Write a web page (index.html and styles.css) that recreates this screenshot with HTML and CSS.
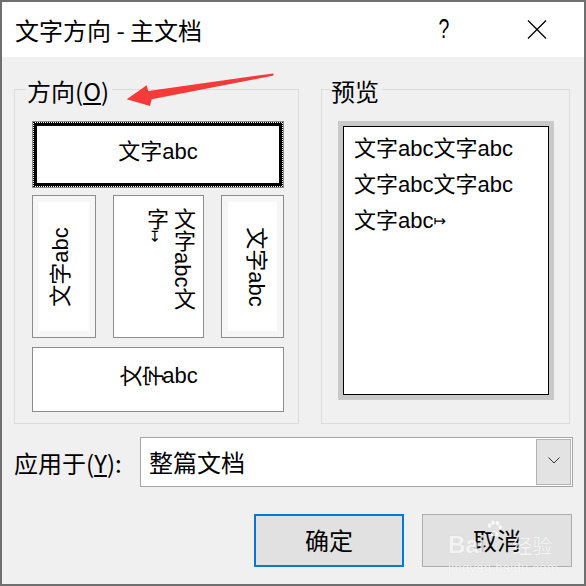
FILE: index.html
```html
<!DOCTYPE html>
<html lang="zh-CN">
<head>
<meta charset="utf-8">
<title>文字方向 - 主文档</title>
<link rel="stylesheet" href="styles.css">
</head>
<body>
<div class="window">
  <div class="titlebar">
    <div class="title">文字方向 - 主文档</div>
    <div class="tb-btn help">?</div>
    <div class="tb-btn close">
      <svg width="20" height="19" viewBox="0 0 20 19"><path d="M1 0.5 L19 18.5 M19 0.5 L1 18.5" stroke="#000" stroke-width="1.3" fill="none"/></svg>
    </div>
  </div>

  <div class="main">
    <fieldset class="group orient">
      <legend>方向(<u>O</u>)</legend>
      <div class="opt sel"><div class="focus"><div class="thick">文字abc</div></div></div>
      <div class="row2">
        <div class="opt faint v1"><span class="rot r270">文字abc</span></div>
        <div class="opt v2"><div class="vtext">文字abc文字<span class="mark">↦</span></div></div>
        <div class="opt faint v3"><span class="rot r90">文字abc</span></div>
      </div>
      <div class="opt h2"><span class="rc">文</span><span class="rc">字</span>abc</div>
    </fieldset>

    <fieldset class="group preview">
      <legend>预览</legend>
      <div class="pv-frame">
        <div class="pv-page">
          <p>文字abc文字abc</p>
          <p>文字abc文字abc</p>
          <p>文字abc<span class="pmark">↦</span></p>
        </div>
      </div>
    </fieldset>
  </div>

  <div class="apply">
    <div class="apply-label">应用于(<u>Y</u>):</div>
    <div class="combo">
      <div class="combo-text">整篇文档</div>
      <div class="combo-btn">
        <svg width="12" height="7" viewBox="0 0 12 7"><path d="M0.5 0.5 L6 6 L11.5 0.5" stroke="#333" stroke-width="1" fill="none"/></svg>
      </div>
    </div>
  </div>

  <div class="buttons">
    <div class="btn ok">确定</div>
    <div class="btn cancel">取消</div>
  </div>

  <svg class="annot" width="586" height="586" viewBox="0 0 586 586">
    <polygon points="126.7,99.3 146.7,85.3 148.3,91 273.3,73.4 273.6,75.6 151.7,99.3 150,106" fill="#f53a3a"/>
  </svg>

  <div class="wm">
    <div class="wm-line"><span class="wm-bai">Bai</span><svg class="paw" width="16" height="18" viewBox="0 0 18 20"><ellipse cx="4" cy="6" rx="2" ry="2.6" /><ellipse cx="8" cy="3" rx="2" ry="2.6"/><ellipse cx="13" cy="3.5" rx="2" ry="2.6"/><ellipse cx="16" cy="8" rx="1.8" ry="2.4"/><path d="M5 16 Q9 8 14 15 Q15 19 10 18 Q6 19 5 16 Z"/></svg><span class="wm-jy">经验</span></div>
    <div class="wm-url">jingyan.baidu.com</div>
  </div>
</div>
</body>
</html>
```

FILE: styles.css
```css
body {
  margin: 0;
  background: #f0f0f0;
}

.window {
  position: relative;
  width: 586px;
  height: 586px;
  box-sizing: border-box;
  border: 2px solid #6f6f6f;
  background: #f0f0f0;
  display: flex;
  flex-direction: column;
  overflow: hidden;
  font-family: "Noto Sans CJK SC", sans-serif;
  color: #000;
}

/* title bar */
.titlebar {
  height: 55px;
  flex: 0 0 55px;
  background: #fff;
  display: flex;
  align-items: center;
}
.title {
  flex: 1;
  padding-left: 13px;
  font-size: 24px;
  line-height: 1;
  white-space: nowrap;
}
.tb-btn {
  height: 55px;
  display: flex;
  align-items: center;
  justify-content: center;
}
.help {
  width: 92px;
  font-family: "Liberation Sans", sans-serif;
  font-size: 27px;
  transform: scaleX(0.72);
}
.close {
  width: 94px;
}

/* group boxes */
.main {
  display: flex;
  align-items: stretch;
  gap: 22px;
  padding: 0 14px 0 12px;
  margin-top: 16px;
}
.group {
  margin: 0;
  min-width: 0;
  border: 1px solid #dcdcdc;
  box-sizing: border-box;
}
.group legend {
  font-size: 24px;
  line-height: 30px;
  padding: 3px 3px 0 1px;
}
.orient {
  flex: 0 0 285px;
  padding: 15px 14px 11px 17px;
}
.orient legend {
  margin-left: -6px;
}
.preview {
  flex: 0 0 249px;
  padding: 15px 15px 23px 16px;
}
.preview legend {
  margin-left: -8px;
}

/* orientation options */
.opt {
  box-sizing: border-box;
  border: 1px solid #8c8c8c;
  background: #fff;
  font-family: "Liberation Sans", "Noto Sans CJK SC", sans-serif;
  font-size: 22px;
  display: flex;
  align-items: center;
  justify-content: center;
  overflow: hidden;
}
.opt.sel {
  height: 67px;
  display: block;
}
.focus {
  height: 100%;
  box-sizing: border-box;
  border: 1px dotted #000;
}
.thick {
  height: 100%;
  box-sizing: border-box;
  border: 3px solid #000;
  display: flex;
  align-items: center;
  justify-content: center;
  padding-bottom: 11px;
}
.row2 {
  display: flex;
  gap: 17px;
  margin-top: 7px;
  height: 143px;
}
.v1 { width: 64px; }
.v2 { width: 91px; align-items: stretch; justify-content: flex-end; }
.v3 { width: 63px; }
.faint {
  box-shadow: inset 0 0 0 6px #f6f6f6;
}
.rot {
  display: inline-block;
  flex-shrink: 0;
  white-space: nowrap;
  line-height: 1;
}
.r270 { transform: translateX(-3px) rotate(-90deg); }
.r90 { transform: translateX(3px) rotate(90deg); }
.vtext {
  writing-mode: vertical-rl;
  text-orientation: mixed;
  line-height: 27px;
  padding: 12px 7px 17px 0;
  box-sizing: border-box;
  height: 100%;
}
.mark {
  font-family: "DejaVu Sans", sans-serif;
  font-size: 15px;
}
.h2 {
  height: 65px;
  margin-top: 9px;
  padding-bottom: 8px;
}
.rc {
  display: inline-block;
  transform: rotate(-90deg);
}

/* preview */
.pv-frame {
  height: 279px;
  box-sizing: border-box;
  padding: 5px;
  background: #c9c9c9;
}
.pv-page {
  height: 100%;
  box-sizing: border-box;
  border: 1px solid #000;
  background: #fff;
  padding: 4px 0 0 10px;
  font-family: "Liberation Sans", "Noto Sans CJK SC", sans-serif;
  font-size: 22px;
  line-height: 36px;
}
.pv-page p {
  margin: 0;
  white-space: nowrap;
}
.pmark {
  font-family: "DejaVu Sans", sans-serif;
  font-size: 15px;
  vertical-align: 2px;
}

/* apply to */
.apply {
  display: flex;
  align-items: center;
  margin-top: 13px;
  padding-left: 12px;
}
.apply-label {
  width: 126px;
  font-size: 24px;
  line-height: 1;
  white-space: nowrap;
  padding-top: 2px;
}
.combo {
  width: 433px;
  height: 50px;
  box-sizing: border-box;
  border: 1px solid #a5a5a5;
  background: #fff;
  display: flex;
  align-items: stretch;
}
.combo-text {
  flex: 1;
  padding-left: 8px;
  font-size: 24px;
  display: flex;
  align-items: center;
  padding-bottom: 2px;
}
.combo-btn {
  width: 35px;
  margin: 1px;
  box-sizing: border-box;
  border: 1px solid #b4b4b4;
  background: #e3e3e3;
  display: flex;
  align-items: center;
  justify-content: center;
  padding-bottom: 3px;
}

/* buttons */
.buttons {
  display: flex;
  justify-content: flex-end;
  gap: 18px;
  padding-right: 12px;
  margin-top: 27px;
}
.btn {
  width: 150px;
  height: 53px;
  box-sizing: border-box;
  background: #e1e1e1;
  font-size: 24px;
  display: flex;
  align-items: center;
  justify-content: center;
  padding-bottom: 2px;
}
.ok { border: 2px solid #0078d7; }
.cancel { border: 1px solid #adadad; }

/* screenshot annotation overlay */
.annot {
  position: absolute;
  left: -2px;
  top: -2px;
  pointer-events: none;
}

/* watermark overlay */
.wm {
  position: absolute;
  left: 446px;
  top: 518px;
  color: rgba(255, 255, 255, 0.8);
  text-shadow: 0 0 1px rgba(0, 0, 0, 0.1);
  pointer-events: none;
  font-family: "Liberation Sans", "Noto Sans CJK SC", sans-serif;
}
.wm-line {
  display: flex;
  align-items: flex-end;
  height: 37px;
}
.wm-bai {
  font-size: 24px;
  font-weight: bold;
  line-height: 1;
}
.paw {
  fill: rgba(255, 255, 255, 0.8);
  margin: 0 2px 2px 1px;
  align-self: flex-start;
}
.wm-jy {
  font-size: 20px;
  line-height: 1;
  margin-left: 8px;
}
.wm-url {
  font-size: 13px;
  line-height: 1;
  margin-top: 4px;
  letter-spacing: 0.3px;
}
```
